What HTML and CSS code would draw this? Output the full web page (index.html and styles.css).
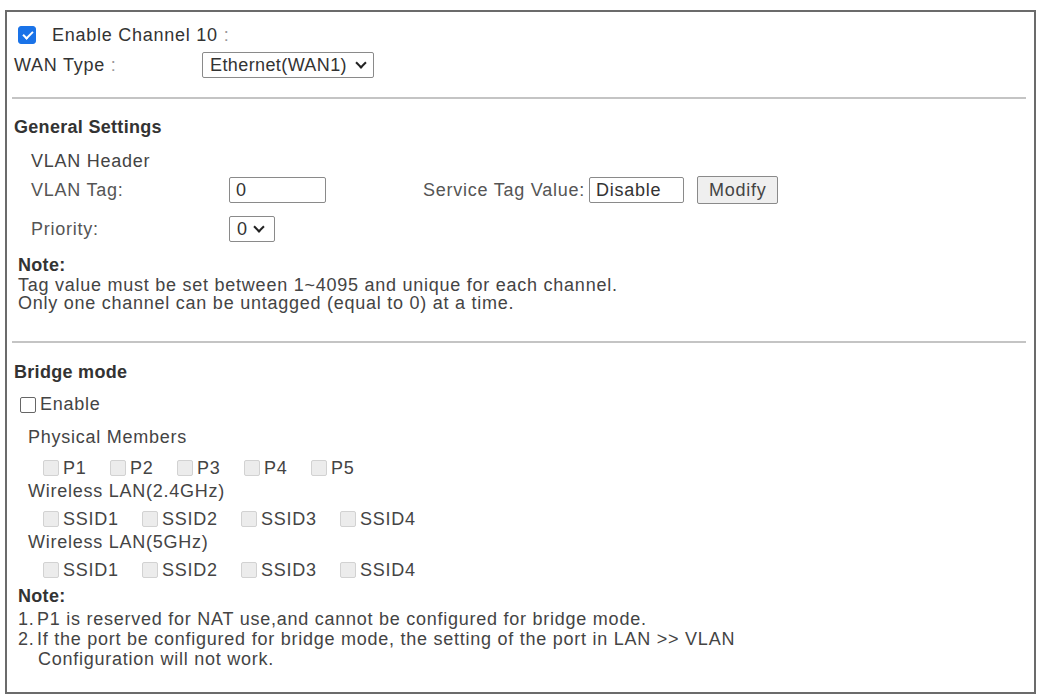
FILE: index.html
```html
<!DOCTYPE html>
<html lang="en">
<head>
    <meta charset="UTF-8">
    <title>Channel 10</title>
    <link rel="stylesheet" href="styles.css">
</head>
<body>
    <div class="panel">
        <div class="top">
            <label class="enable-line"><span class="chk checked"></span><span>Enable Channel 10 <span class="dim">:</span></span></label>
            <div class="row">
                <span class="lbl-wan">WAN Type <span class="dim">:</span></span>
                <span class="select wan">Ethernet(WAN1)<span class="caret"></span></span>
            </div>
        </div>
        <hr>
        <div class="section">
            <h4>General Settings</h4>
            <div class="indent">
                <div class="sub">VLAN Header</div>
                <div class="grid">
                    <span class="lbl">VLAN Tag:</span>
                    <span class="field tag">0</span>
                    <span class="service">Service Tag Value:<span class="field disable">Disable</span><span class="btn">Modify</span></span>
                    <span class="lbl">Priority:</span>
                    <span class="select prio">0<span class="caret"></span></span>
                </div>
            </div>
            <div class="note first">
                <b>Note:</b>
                <p>Tag value must be set between 1~4095 and unique for each channel.<br>Only one channel can be untagged (equal to 0) at a time.</p>
            </div>
        </div>
        <hr>
        <div class="section bridge">
            <h4>Bridge mode</h4>
            <label class="enable-bridge"><span class="chk plain"></span>Enable</label>
            <div class="members">
                <div class="sub">Physical Members</div>
                <div class="opts ports">
                    <span><i class="chk off"></i>P1</span>
                    <span><i class="chk off"></i>P2</span>
                    <span><i class="chk off"></i>P3</span>
                    <span><i class="chk off"></i>P4</span>
                    <span><i class="chk off"></i>P5</span>
                </div>
                <div class="sub">Wireless LAN(2.4GHz)</div>
                <div class="opts ssids">
                    <span><i class="chk off"></i>SSID1</span>
                    <span><i class="chk off"></i>SSID2</span>
                    <span><i class="chk off"></i>SSID3</span>
                    <span><i class="chk off"></i>SSID4</span>
                </div>
                <div class="sub">Wireless LAN(5GHz)</div>
                <div class="opts ssids">
                    <span><i class="chk off"></i>SSID1</span>
                    <span><i class="chk off"></i>SSID2</span>
                    <span><i class="chk off"></i>SSID3</span>
                    <span><i class="chk off"></i>SSID4</span>
                </div>
            </div>
            <div class="note">
                <b>Note:</b>
                <div class="item"><span class="num">1.</span>P1 is reserved for NAT use,and cannot be configured for bridge mode.</div>
                <div class="item"><span class="num">2.</span>If the port be configured for bridge mode, the setting of the port in LAN &gt;&gt; VLAN</div>
                <div class="item cont">Configuration will not work.</div>
            </div>
        </div>
    </div>
</body>
</html>
```

FILE: styles.css
```css
body { margin: 0; padding: 10px 7px 2px 5px; background: #fff; font-family: "Liberation Sans", Arial, sans-serif; font-size: 18px; letter-spacing: 0.75px; color: #333; }
.panel { border: 2px solid #6b6b6b; height: 684px; box-sizing: border-box; padding: 0 6px 0 3px; }
.dim { color: #999; }
.top { padding: 10px 4px 0 4px; }
.enable-line { display: flex; align-items: center; gap: 16px; padding-left: 4px; height: 26px; }
.row { display: flex; align-items: center; height: 30px; margin-top: 2px; }
.lbl-wan { width: 188px; }
.chk { display: inline-block; width: 16px; height: 16px; border: 1px solid #777; border-radius: 2px; box-sizing: border-box; flex: none; }
.chk.checked { width: 18px; height: 18px; background: #1a73e8; border-color: #1a73e8; border-radius: 3px; position: relative; }
.chk.checked::after { content: ""; position: absolute; left: 6px; top: 2px; width: 4px; height: 8px; border: solid #fff; border-width: 0 2px 2px 0; transform: rotate(45deg); }
.select { display: inline-flex; align-items: center; gap: 8px; border: 1px solid #8a8a8a; border-radius: 2px; padding: 0 6px 0 7px; height: 26px; box-sizing: border-box; color: #333; letter-spacing: 0.4px; }
.caret { width: 6px; height: 6px; border: solid #222; border-width: 0 2px 2px 0; transform: rotate(45deg); margin-top: -5px; margin-left: 2px; }
.wan { width: 172px; }
hr { border: 0; border-top: 2px solid #c4c4c4; margin: 17px 2px 0 2px; }
.section { padding: 0 4px; }
h4 { margin: 18px 0 0 0; font-size: 18px; color: #333; letter-spacing: 0.3px; }
.indent { padding-left: 17px; }
.sub { color: #444; line-height: 24px; }
.indent .sub { margin-top: 11px; }
.grid { display: grid; grid-template-columns: 198px 194px auto; align-items: center; row-gap: 12px; margin-top: 3px; }
.lbl { color: #555; }
.field { display: inline-block; border: 1px solid #8a8a8a; border-radius: 2px; height: 26px; line-height: 24px; box-sizing: border-box; padding: 0 6px; color: #333; }
.tag { width: 97px; }
.service { display: flex; align-items: center; color: #555; }
.disable { width: 95px; margin-left: 4px; }
.btn { display: inline-block; margin-left: 13px; border: 1px solid #8a8a8a; background: #efefef; border-radius: 2px; height: 28px; line-height: 26px; padding: 0 11px; box-sizing: border-box; color: #444; }
.prio { width: 46px; gap: 6px; }
.note { margin-top: 12px; padding-left: 4px; }
.note b { display: block; line-height: 22px; color: #333; letter-spacing: 0.3px; }
.note p { margin: 0; line-height: 18px; color: #444; }
.note.first { margin-bottom: 29px; }
.bridge h4 { margin-top: 19px; }
.enable-bridge { display: flex; align-items: center; gap: 4px; margin-top: 11px; padding-left: 6px; color: #444; }
.chk.plain { border-color: #666; }
.members { padding-left: 14px; margin-top: 11px; }
.members .sub { line-height: 22px; }
.opts { display: flex; padding-left: 15px; line-height: 24px; padding-top: 5px; color: #444; }
.opts.ports { padding-top: 8px; }
.opts span { display: flex; align-items: center; gap: 4px; }
.ports span { width: 67px; }
.ssids span { width: 99px; }
.chk.off { background: #ececec; border-color: #d2d2d2; }
.bridge .note { margin-top: 3px; }
.item { line-height: 20px; color: #444; }
.bridge .note b { margin-bottom: 2px; }
.num { display: inline-block; width: 19px; }
.cont { padding-left: 20px; }
```
